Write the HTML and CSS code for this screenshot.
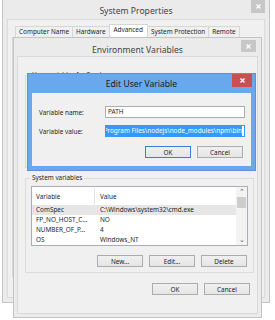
FILE: index.html
```html
<!DOCTYPE html>
<html>
<head>
    <title>System Properties</title>
    <link rel="stylesheet" href="styles.css">
</head>
<body>
    <!-- System Properties (back window) -->
    <div class="window sysprops">
        <div class="titlebar">
            <span class="title">System Properties</span>
            <span class="close">
                <svg width="5" height="5" viewBox="0 0 5 5"><path d="M0.5 0.5L4.5 4.5M4.5 0.5L0.5 4.5" stroke="#fff" stroke-width="1.2"/></svg>
            </span>
        </div>
        <div class="client">
            <div class="tabs">
                <span class="tab">Computer Name</span>
                <span class="tab">Hardware</span>
                <span class="tab active">Advanced</span>
                <span class="tab">System Protection</span>
                <span class="tab">Remote</span>
            </div>
            <div class="tab-panel"></div>
        </div>
    </div>

    <!-- Environment Variables -->
    <div class="window envvars">
        <div class="titlebar">
            <span class="title">Environment Variables</span>
            <span class="close">
                <svg width="5" height="5" viewBox="0 0 5 5"><path d="M0.5 0.5L4.5 4.5M4.5 0.5L0.5 4.5" stroke="#fff" stroke-width="1.2"/></svg>
            </span>
        </div>
        <div class="client">
            <fieldset class="group user-group">
                <legend>User variables for Sarah</legend>
            </fieldset>

            <fieldset class="group system-group">
                <legend>System variables</legend>
                <div class="listview">
                    <div class="list-body">
                        <div class="list-row list-head">
                            <span class="col-name">Variable</span>
                            <span class="col-value">Value</span>
                        </div>
                        <div class="list-row selected">
                            <span class="col-name">ComSpec</span>
                            <span class="col-value">C:\Windows\system32\cmd.exe</span>
                        </div>
                        <div class="list-row">
                            <span class="col-name">FP_NO_HOST_C...</span>
                            <span class="col-value">NO</span>
                        </div>
                        <div class="list-row">
                            <span class="col-name">NUMBER_OF_P...</span>
                            <span class="col-value">4</span>
                        </div>
                        <div class="list-row">
                            <span class="col-name">OS</span>
                            <span class="col-value">Windows_NT</span>
                        </div>
                    </div>
                    <div class="scrollbar">
                        <span class="arrow">&#8963;</span>
                        <span class="thumb"></span>
                        <span class="track"></span>
                        <span class="arrow">&#8964;</span>
                    </div>
                </div>
                <div class="button-row">
                    <button>New...</button>
                    <button>Edit...</button>
                    <button>Delete</button>
                </div>
            </fieldset>

            <div class="button-row dialog-buttons">
                <button>OK</button>
                <button>Cancel</button>
            </div>
        </div>
    </div>

    <!-- Edit User Variable (active dialog) -->
    <div class="window editvar">
        <div class="titlebar">
            <span class="title">Edit User Variable</span>
            <span class="close">
                <svg width="5" height="5" viewBox="0 0 5 5"><path d="M0.5 0.5L4.5 4.5M4.5 0.5L0.5 4.5" stroke="#fff" stroke-width="1.4"/></svg>
            </span>
        </div>
        <div class="client">
            <div class="form">
                <label for="varName">Variable name:</label>
                <div class="textbox" id="varName">PATH</div>
                <label for="varValue">Variable value:</label>
                <div class="textbox focused" id="varValue">
                    <span class="selection">C:\Program Files\nodejs\node_modules\npm\bin</span>
                </div>
            </div>
            <div class="button-row">
                <button class="default">OK</button>
                <button>Cancel</button>
            </div>
        </div>
    </div>
</body>
</html>
```

FILE: styles.css
```css
body {
    margin: 0;
    width: 275px;
    height: 320px;
    position: relative;
    overflow: hidden;
    background-color: #fff;
    font-family: 'Noto Sans', 'Open Sans', sans-serif;
    font-size: 6.4px;
    color: #1e1e1e;
}

/* Window frames */
.window {
    position: absolute;
    display: flex;
    flex-direction: column;
    box-sizing: border-box;
    border: 1px solid #c4c4c4;
    background-color: #ebebeb;
}

.titlebar {
    position: relative;
    display: flex;
    align-items: center;
    justify-content: center;
    flex-shrink: 0;
    box-sizing: border-box;
}

.title {
    font-size: 8.6px;
    color: #444;
}

.close {
    position: absolute;
    display: flex;
    align-items: center;
    justify-content: center;
    background-color: #c7c7c7;
}

.client {
    flex: 1;
    box-sizing: border-box;
    background-color: #f0f0f0;
    border: 1px solid #dadada;
}

/* System Properties */
.sysprops {
    left: 2px;
    top: -3px;
    width: 268px;
    height: 306px;
}

.sysprops .titlebar {
    height: 21px;
    padding-top: 5px;
}

.sysprops .close {
    top: 2px;
    right: 4px;
    width: 14px;
    height: 13px;
}

.sysprops .client {
    margin: 0 4px 4px;
    padding: 4px 2px 0 4px;
}

.tabs {
    display: flex;
    align-items: flex-end;
    height: 13px;
    padding-left: 3px;
}

.tab {
    height: 11px;
    box-sizing: border-box;
    padding: 0 3px;
    border: 1px solid #d6d6d6;
    border-bottom: none;
    margin-right: -1px;
    background-color: #f0f0f0;
    line-height: 10px;
    white-space: nowrap;
}

.tab.active {
    height: 13px;
    background-color: #fff;
    padding: 0 4px;
    line-height: 10px;
    position: relative;
    z-index: 1;
}

.tab-panel {
    height: 238px;
    border: 1px solid #d6d6d6;
    background-color: #fff;
}

/* Environment Variables */
.envvars {
    left: 13px;
    top: 37px;
    width: 249px;
    height: 281px;
}

.envvars .titlebar {
    height: 18px;
    padding-top: 5px;
}

.envvars .close {
    top: 2px;
    right: 5px;
    width: 15px;
    height: 12px;
}

.envvars .client {
    margin: 0 3px 3px;
    padding: 14px 3px 0 7px;
}

.group {
    margin: 0;
    padding: 0 5px 0 5px;
    border: 1px solid #dcdcdc;
}

.group legend {
    padding: 0 2px;
    margin-left: -1px;
    line-height: 8px;
}

.user-group {
    height: 95px;
}

.system-group {
    margin-top: 6px;
    padding-top: 4px;
    padding-bottom: 5px;
}

.listview {
    display: flex;
    height: 60px;
    box-sizing: border-box;
    border: 1px solid #a9acb2;
    background-color: #fff;
}

.list-body {
    flex: 1;
    padding-top: 1px;
}

.list-row {
    display: flex;
    height: 10px;
    line-height: 10px;
    white-space: nowrap;
}

.list-head {
    height: 17px;
    line-height: 17px;
}

.list-head .col-name {
    border-right: 1px solid #e4e4e4;
}

.list-row.selected {
    background-color: #e6e6e6;
}

.col-name {
    width: 63px;
    box-sizing: border-box;
    padding-left: 4px;
    overflow: hidden;
}

.col-value {
    padding-left: 5px;
}

.scrollbar {
    width: 11px;
    display: flex;
    flex-direction: column;
    align-items: center;
    background-color: #f3f3f3;
}

.arrow {
    height: 10px;
    line-height: 10px;
    font-size: 7px;
    color: #555;
}

.thumb {
    width: 9px;
    height: 11px;
    background-color: #cdcdcd;
}

.track {
    flex: 1;
}

/* Buttons */
.button-row {
    display: flex;
    justify-content: flex-end;
    gap: 6px;
}

.system-group .button-row {
    margin-top: 9px;
    padding-right: 1px;
}

.dialog-buttons {
    margin-top: 10px;
    padding-right: 4px;
}

button {
    width: 46px;
    height: 12px;
    padding: 0;
    box-sizing: border-box;
    border: 1px solid #acacac;
    background: linear-gradient(#f0f0f0, #e5e5e5);
    font-family: inherit;
    font-size: 6.4px;
    color: #1e1e1e;
}

button.default {
    border-color: #3c7fd8;
}

/* Edit User Variable */
.editvar {
    left: 27px;
    top: 73px;
    width: 229px;
    height: 98px;
    background-color: #6aa8ee;
    border-color: #5a92d6;
}

.editvar .titlebar {
    height: 19px;
}

.editvar .title {
    color: #1a1a1a;
}

.editvar .close {
    top: 0;
    right: 3px;
    width: 20px;
    height: 13px;
    background-color: #c75050;
}

.editvar .client {
    margin: 0 4px 4px;
    border: none;
    padding: 13px 6px 0 7px;
}

.form {
    display: grid;
    grid-template-columns: 66px 140px;
    row-gap: 7px;
    align-items: center;
}

.textbox {
    height: 12px;
    box-sizing: border-box;
    border: 1px solid #abadb3;
    background-color: #fff;
    padding: 0 2px;
    line-height: 10px;
    white-space: nowrap;
    overflow: hidden;
}

.textbox.focused {
    display: flex;
    justify-content: flex-end;
    border-color: #3399ff;
}

.selection {
    background-color: #3399ff;
    color: #fff;
}

.editvar .button-row {
    margin-top: 9px;
    padding-right: 2px;
}
```
